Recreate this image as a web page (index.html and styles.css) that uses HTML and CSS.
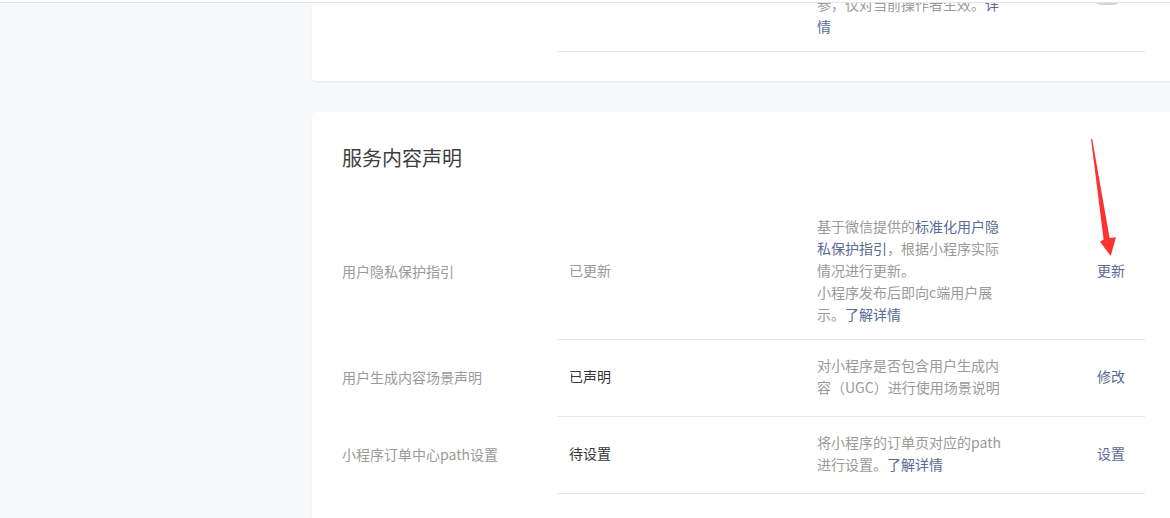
FILE: index.html
```html
<!DOCTYPE html>
<html lang="zh-CN">
<head>
<meta charset="utf-8">
<title>服务内容声明</title>
<link rel="stylesheet" href="styles.css">
</head>
<body>
<div class="topbar"></div>
<div class="viewport">
  <div class="sidebar"></div>
  <div class="main">
    <div class="card card-top">
      <div class="row">
        <div class="label"></div>
        <div class="rest">
          <div class="status"></div>
          <div class="desc">该设置开启后将在小程序中生<br>效，相关能力说明仅供操作者<br>参，仅对当前操作者生效。<a class="link">详</a><br><a class="link">情</a></div>
          <div class="action action-top"><span class="switch"></span></div>
        </div>
      </div>
    </div>

    <div class="card card-main">
      <h2 class="title">服务内容声明</h2>
      <div class="row">
        <div class="label">用户隐私保护指引</div>
        <div class="rest">
          <div class="status muted">已更新</div>
          <div class="desc">基于微信提供的<a class="link">标准化用户隐<br>私保护指引</a>，根据小程序实际<br>情况进行更新。<br>小程序发布后即向c端用户展<br>示。<a class="link">了解详情</a></div>
          <div class="action"><a class="link">更新</a></div>
        </div>
      </div>
      <div class="row">
        <div class="label">用户生成内容场景声明</div>
        <div class="rest">
          <div class="status">已声明</div>
          <div class="desc">对小程序是否包含用户生成内<br>容（UGC）进行使用场景说明</div>
          <div class="action"><a class="link">修改</a></div>
        </div>
      </div>
      <div class="row">
        <div class="label">小程序订单中心path设置</div>
        <div class="rest">
          <div class="status">待设置</div>
          <div class="desc">将小程序的订单页对应的path<br>进行设置。<a class="link">了解详情</a></div>
          <div class="action"><a class="link">设置</a></div>
        </div>
      </div>
    </div>
  </div>
</div>
<svg class="arrow" width="40" height="130" viewBox="0 0 40 130" xmlns="http://www.w3.org/2000/svg">
  <polygon points="6,4 7.2,4 24.6,103 31,102.3 25.7,121 15,106.7 18.6,104.6" fill="#ff3232"/>
</svg>
</body>
</html>
```

FILE: styles.css
```css
* { box-sizing: border-box; }

html, body {
  margin: 0;
  padding: 0;
}

body {
  background: #f7f8fa;
  font-family: "Noto Sans CJK SC", "Noto Sans", sans-serif;
  font-size: 14px;
  color: #353535;
  width: 1170px;
  height: 518px;
  overflow: hidden;
  position: relative;
}

.topbar {
  height: 3px;
  background: #ffffff;
  border-bottom: 1px solid #e3e4e6;
}

.viewport {
  display: flex;
  height: 515px;
  overflow: hidden;
}

.sidebar {
  width: 312px;
  flex: none;
}

.main {
  width: 863px;
  flex: none;
}

.card {
  background: #ffffff;
  border-radius: 4px;
  box-shadow: 0 1px 2px rgba(0, 0, 0, 0.07);
  padding: 0 30px 29px;
}

.card-top {
  margin-top: -64px;
}

.card-main {
  margin-top: 31px;
  padding-top: 32px;
  padding-bottom: 60px;
}

.title {
  margin: 0 0 33px;
  font-size: 20px;
  line-height: 28px;
  font-weight: normal;
  color: #3e3e3e;
}

.row {
  display: grid;
  grid-template-columns: 215px 1fr;
  align-items: center;
}

.label {
  color: #9a9a9a;
  line-height: 22px;
  padding-bottom: 4px;
}

.rest {
  display: flex;
  align-items: center;
  min-height: 77px;
  padding: 10px 0 14px;
  border-bottom: 1px solid #e7e8ea;
}

.status {
  width: 248px;
  flex: none;
  padding-left: 12px;
  line-height: 22px;
  color: #353535;
}

.status.muted {
  color: #9a9a9a;
}

.desc {
  width: 210px;
  flex: none;
  padding-left: 12px;
  line-height: 22px;
  color: #9a9a9a;
  white-space: nowrap;
}

.link {
  color: #576b95;
  text-decoration: none;
}

.action {
  flex: 1;
  text-align: right;
  padding-right: 20px;
  line-height: 22px;
}

.action-top {
  align-self: flex-start;
  display: flex;
  justify-content: flex-end;
  padding-right: 24px;
}

.switch {
  display: block;
  width: 28px;
  height: 16px;
  margin-top: 40px;
  border-radius: 8px;
  background: #d4d4d4;
}

.arrow {
  position: absolute;
  left: 1085px;
  top: 135px;
}
```
